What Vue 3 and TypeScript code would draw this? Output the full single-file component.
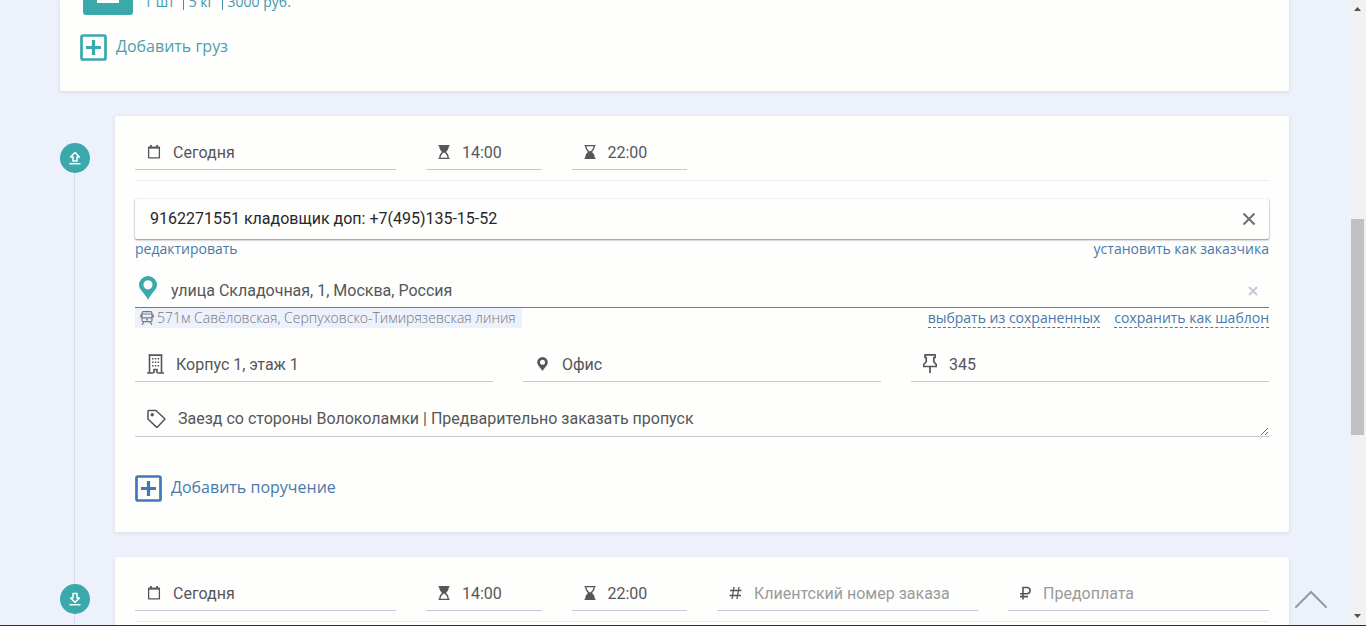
<script setup lang="ts">
import { ref } from 'vue'

interface Field {
  id: string
  icon: string
  label: string
  value: string
  placeholder?: string
  wide?: boolean
}

const pickup = ref<Field[]>([
  { id: 'pickup-date', icon: 'calendar', label: 'Дата', value: 'Сегодня', wide: true },
  { id: 'pickup-from', icon: 'glass-start', label: 'С', value: '14:00' },
  { id: 'pickup-to', icon: 'glass-end', label: 'До', value: '22:00' },
])

const delivery = ref<Field[]>([
  { id: 'delivery-date', icon: 'calendar', label: 'Дата', value: 'Сегодня', wide: true },
  { id: 'delivery-from', icon: 'glass-start', label: 'С', value: '14:00' },
  { id: 'delivery-to', icon: 'glass-end', label: 'До', value: '22:00' },
  { id: 'order-number', icon: 'hash', label: 'Номер', value: '', placeholder: 'Клиентский номер заказа', wide: true },
  { id: 'prepay', icon: 'ruble', label: 'Предоплата', value: '', placeholder: 'Предоплата', wide: true },
])

const place = ref<Field[]>([
  { id: 'building', icon: 'building', label: 'Корпус', value: 'Корпус 1, этаж 1' },
  { id: 'kind', icon: 'marker', label: 'Тип', value: 'Офис' },
  { id: 'room', icon: 'pushpin', label: 'Номер', value: '345' },
])

const contact = ref('9162271551 кладовщик доп: +7(495)135-15-52')
const address = ref('улица Складочная, 1, Москва, Россия')
const note = ref('Заезд со стороны Волоколамки | Предварительно заказать пропуск')
</script>

<template>
  <div class="window">
    <svg class="sprite" aria-hidden="true">
      <symbol id="i-calendar" viewBox="0 0 14 14">
        <path d="M1.600 2.500h10.800v10.300H1.600z" fill="none" stroke="currentColor" stroke-width="1.300" stroke-linejoin="round" />
        <path d="M1 1.800h12v1.700H1zM3 0h1.800v3H3zM9.200 0H11v3H9.200z" fill="currentColor" />
      </symbol>
      <symbol id="i-glass-start" viewBox="0 0 12 14">
        <path d="M.5 0h11v1.300h-.7C10.800 4 9.400 5.600 8 7c1.400 1.400 2.800 3 2.800 5.700h.7V14H.5v-1.300h.7C1.200 10 2.600 8.400 4 7 2.600 5.600 1.200 4 1.200 1.300H.5z" fill="currentColor" />
        <path d="M6 7.400C4.400 8.400 2.700 10 2.500 12.700h7C9.300 10 7.600 8.400 6 7.400z" fill="#fefefd" />
      </symbol>
      <symbol id="i-glass-end" viewBox="0 0 12 14">
        <path d="M.5 0h11v1.300h-.7C10.800 4 9.400 5.600 8 7c1.400 1.400 2.800 3 2.800 5.700h.7V14H.5v-1.300h.7C1.200 10 2.600 8.400 4 7 2.600 5.600 1.200 4 1.200 1.300H.5z" fill="currentColor" />
        <path d="M6 6.600C7.600 5.600 9.300 4 9.500 1.300h-7C2.700 4 4.400 5.600 6 6.600z" fill="#fefefd" />
      </symbol>
      <symbol id="i-hash" viewBox="0 0 13 14">
        <path d="M5 1L3 13M10 1L8 13M1 4.500h11.500M.5 9.500H12" fill="none" stroke="currentColor" stroke-width="1.300" />
      </symbol>
      <symbol id="i-ruble" viewBox="0 0 11 14">
        <path d="M3 13.500V1.500h4a3.100 3.100 0 0 1 0 6.200H0M0 10.600h8" fill="none" stroke="currentColor" stroke-width="1.600" />
      </symbol>
      <symbol id="i-building" viewBox="0 0 17 20">
        <path d="M2.500 19V1.200h12V19M0 19h6.500M10.500 19H17M7 19v-3.500h3V19M1.500 1h14" fill="none" stroke="currentColor" stroke-width="1.600" />
        <path d="M5 4h1.500v1.600H5zm2.800 0h1.500v1.600H7.800zm2.800 0h1.500v1.600h-1.500zM5 7.500h1.500v1.600H5zm2.800 0h1.500v1.600H7.800zm2.800 0h1.500v1.600h-1.500zM5 11h1.500v1.600H5zm2.800 0h1.500v1.600H7.800zm2.800 0h1.500v1.600h-1.500z" fill="currentColor" />
      </symbol>
      <symbol id="i-marker" viewBox="0 0 15 14">
        <path d="M7.500 0A5.300 5.300 0 0 1 12.800 5.200C12.800 8.300 9.500 10.500 7.500 14 5.500 10.500 2.200 8.300 2.200 5.200A5.300 5.300 0 0 1 7.500 0zm0 2.700a2.500 2.500 0 1 0 0 5 2.500 2.500 0 0 0 0-5z" fill="currentColor" />
      </symbol>
      <symbol id="i-pushpin" viewBox="0 0 14 19">
        <path d="M2 .9h10.200v2.600h-1.400v4.200l2.500 2.800v2H.7v-2l2.500-2.800V3.500H2zM7 12.500V19" fill="none" stroke="currentColor" stroke-width="1.700" stroke-linejoin="round" />
      </symbol>
      <symbol id="i-tag" viewBox="0 0 20 20">
        <path d="M1 1.800Q1 1 1.800 1H9.500L18.500 9.500Q19 10 18.500 10.500L11 18.500Q10.500 19 10 18.500L1 10z" fill="none" stroke="currentColor" stroke-width="1.600" stroke-linejoin="round" />
        <circle cx="5.500" cy="5.500" r="1.800" fill="currentColor" />
      </symbol>
      <symbol id="i-plus" viewBox="0 0 27 27">
        <rect x="1.500" y="1.500" width="24" height="24" rx="1.500" fill="none" stroke="currentColor" stroke-width="2.700" />
        <path d="M13.500 6v15M6 13.500h15" stroke="currentColor" stroke-width="3.200" />
      </symbol>
      <symbol id="i-up" viewBox="0 0 14 14">
        <path d="M7 1.500l4.500 4.500H9v4H5V6H2.500z" fill="none" stroke="currentColor" stroke-width="1.500" stroke-linejoin="round" />
        <path d="M1.500 12.700h11" stroke="currentColor" stroke-width="1.500" />
      </symbol>
      <symbol id="i-down" viewBox="0 0 14 14">
        <path d="M7 10.300L2.500 6H5V1.500h4V6h2.500z" fill="none" stroke="currentColor" stroke-width="1.500" stroke-linejoin="round" />
        <path d="M1.500 12.700h11" stroke="currentColor" stroke-width="1.500" />
      </symbol>
    </svg>

    <main class="page">
      <section class="card cargo-card">
        <div class="cargo">
          <div class="cargo-tile">
            <svg width="24" height="30" viewBox="0 0 24 30"><path d="M1 0h22v18H1z" fill="currentColor" /></svg>
          </div>
          <p class="cargo-info"><span>1 шт</span><span>5 кг</span><span>3000 руб.</span></p>
        </div>
        <button type="button" class="add teal">
          <svg width="27" height="27"><use href="#i-plus" /></svg>
          <span>Добавить груз</span>
        </button>
      </section>

      <section class="stop">
        <div class="rail">
          <span class="rail-top"></span>
          <span class="badge"><svg width="14" height="14"><use href="#i-up" /></svg></span>
          <span class="rail-line"></span>
        </div>
        <div class="card stop-card">
          <div class="schedule">
            <label v-for="f in pickup" :key="f.id" class="field" :class="{ wide: f.wide }">
              <svg class="icon" :class="f.icon"><use :href="'#i-' + f.icon" /></svg>
              <input v-model="f.value" type="text" :id="f.id" :aria-label="f.label" />
            </label>
          </div>
          <hr />
          <div class="contact">
            <input v-model="contact" type="text" aria-label="Контакт" />
            <button type="button" class="clear" aria-label="Удалить контакт" @click="contact = ''">
              <svg width="14" height="14" viewBox="0 0 14 14"><path d="M1.500 1.500l11 11M12.500 1.500l-11 11" stroke="currentColor" stroke-width="2" /></svg>
            </button>
          </div>
          <div class="links">
            <a href="#edit">редактировать</a>
            <a href="#customer">установить как заказчика</a>
          </div>
          <div class="address">
            <svg class="pin" width="18" height="24" viewBox="0 0 18 24">
              <path d="M9 0a9 9 0 0 1 9 9c0 5-6 8-9 15C6 17 0 14 0 9a9 9 0 0 1 9-9zm0 4.200a4.600 4.600 0 1 0 0 9.200 4.600 4.600 0 0 0 0-9.200z" fill="currentColor" />
            </svg>
            <input v-model="address" type="text" aria-label="Адрес" />
            <button type="button" class="clear pale" aria-label="Очистить адрес" @click="address = ''">
              <svg width="10" height="10" viewBox="0 0 10 10"><path d="M1 1l8 8M9 1L1 9" stroke="currentColor" stroke-width="2.200" /></svg>
            </button>
          </div>
          <div class="links saved">
            <span class="metro">
              <svg width="14" height="14" viewBox="0 0 14 14">
                <path d="M3.500.7h7Q12 .7 12 2.200v7Q12 10.700 10.500 10.700h-7Q2 10.700 2 9.200v-7Q2 .7 3.500.7zM2 3h10M2 6.800h10M3.800 11L2.200 13.800M10.200 11l1.600 2.800M.8 3.500v3M13.200 3.500v3" fill="none" stroke="currentColor" stroke-width="1.200" />
                <circle cx="7" cy="8.800" r="1" fill="currentColor" />
              </svg>
              571м Савёловская, Серпуховско-Тимирязевская линия
            </span>
            <span class="saved-actions">
              <a href="#saved">выбрать из сохраненных</a>
              <a href="#template">сохранить как шаблон</a>
            </span>
          </div>
          <div class="place">
            <label v-for="f in place" :key="f.id" class="field">
              <svg class="icon" :class="f.icon"><use :href="'#i-' + f.icon" /></svg>
              <input v-model="f.value" type="text" :id="f.id" :aria-label="f.label" />
            </label>
          </div>
          <label class="field note">
            <svg class="icon tag"><use href="#i-tag" /></svg>
            <textarea v-model="note" rows="1" aria-label="Комментарий"></textarea>
          </label>
          <button type="button" class="add blue">
            <svg width="27" height="27"><use href="#i-plus" /></svg>
            <span>Добавить поручение</span>
          </button>
        </div>
      </section>

      <section class="stop">
        <div class="rail">
          <span class="rail-top"></span>
          <span class="badge"><svg width="14" height="14"><use href="#i-down" /></svg></span>
          <span class="rail-line"></span>
        </div>
        <div class="card stop-card">
          <div class="schedule">
            <label v-for="f in delivery" :key="f.id" class="field" :class="{ wide: f.wide }">
              <svg class="icon" :class="f.icon"><use :href="'#i-' + f.icon" /></svg>
              <input v-model="f.value" type="text" :id="f.id" :aria-label="f.label" :placeholder="f.placeholder" />
            </label>
          </div>
          <hr />
        </div>
      </section>
    </main>

    <button type="button" class="to-top" aria-label="Наверх">
      <svg width="34" height="20" viewBox="0 0 34 20"><path d="M2 18L17 3l15 15" fill="none" stroke="currentColor" stroke-width="2" stroke-linecap="round" /></svg>
    </button>

    <div class="scrollbar" aria-hidden="true">
      <svg width="7" height="4" viewBox="0 0 7 4"><path d="M0 4L3.500 0 7 4z" fill="currentColor" /></svg>
      <div class="track"><div class="thumb"></div></div>
      <svg width="7" height="4" viewBox="0 0 7 4"><path d="M0 0l3.500 4L7 0z" fill="currentColor" /></svg>
    </div>
  </div>
</template>

<style>
body {
  margin: 0;
  background: #edf1fc;
}
</style>

<style scoped>
.window {
  box-sizing: border-box;
  display: flex;
  height: 100vh;
  overflow: hidden;
  position: relative;
  background: #edf1fc;
  border-bottom: 1px solid #2a2f31;
  font-family: "Open Sans", "Noto Sans", sans-serif;
  color: #55565a;
}
.sprite {
  position: absolute;
  width: 0;
  height: 0;
}
.page {
  flex: 1;
  min-width: 0;
  padding: 0 60px;
}
.card {
  box-sizing: border-box;
  background: #fefefd;
  border-radius: 2px;
  box-shadow: 0 1px 4px rgba(60, 60, 40, 0.12);
}
.cargo-card {
  padding: 0 20px 30px;
  margin-bottom: 25px;
  border-radius: 0 0 2px 2px;
}
.cargo {
  display: flex;
  align-items: flex-end;
  gap: 11px;
  height: 15px;
  padding-left: 3px;
  margin-bottom: 19px;
  color: #3f97a9;
}
.cargo-tile {
  display: flex;
  align-items: flex-end;
  justify-content: center;
  box-sizing: border-box;
  width: 50px;
  height: 50px;
  border-radius: 3px;
  background: #3ba8ab;
  color: #fff;
}
.cargo-info {
  display: flex;
  margin: 0;
  font-size: 14px;
  line-height: 26px;
}
.cargo-info span + span {
  margin-left: 8px;
}
.cargo-info span + span::before {
  content: "";
  display: inline-block;
  width: 1px;
  height: 14px;
  margin-right: 5px;
  vertical-align: -3px;
  background: currentColor;
}
button {
  border: 0;
  padding: 0;
  background: none;
  font-family: inherit;
  cursor: pointer;
}
svg {
  display: block;
  flex: none;
}
.add {
  display: flex;
  gap: 9px;
  font-size: 16px;
  line-height: 24px;
}
.add.teal {
  color: #3ba8ab;
}
.add.teal span {
  color: #4e9eac;
}
.add.blue {
  color: #4277bd;
  margin-top: 38px;
}
.add.blue span {
  color: #4a78ab;
}
.stop {
  display: grid;
  grid-template-columns: 30px minmax(0, 1fr);
  column-gap: 25px;
}
.stop-card {
  padding: 18px 20px 30px;
  margin-bottom: 25px;
}
.rail {
  display: flex;
  flex-direction: column;
  align-items: center;
}
.rail-top,
.rail-line {
  width: 1px;
  margin-right: 1px;
  background: #d8def0;
}
.rail-top {
  height: 27px;
}
.stop:nth-of-type(2) .rail-top {
  background: none;
}
.rail-line {
  flex: 1;
}
.badge {
  display: flex;
  align-items: center;
  justify-content: center;
  width: 30px;
  height: 30px;
  border-radius: 50%;
  background: #3ba8ab;
  color: #fff;
}
.schedule {
  display: grid;
  grid-template-columns: repeat(8, minmax(0, 1fr));
  column-gap: 30px;
}
.wide {
  grid-column: span 2;
}
.place {
  display: grid;
  grid-template-columns: repeat(3, minmax(0, 1fr));
  column-gap: 30px;
  margin-top: 18px;
}
.field {
  box-sizing: border-box;
  display: flex;
  align-items: center;
  gap: 12px;
  height: 36px;
  padding-left: 12px;
  border-bottom: 1px solid #c3c9d8;
}
.icon {
  width: 14px;
  height: 14px;
}
.glass-start,
.glass-end {
  width: 12px;
}
.hash {
  width: 13px;
}
.ruble {
  width: 11px;
}
.building {
  width: 17px;
  height: 20px;
}
.marker {
  width: 15px;
}
.pushpin {
  width: 14px;
  height: 19px;
}
.tag {
  width: 19px;
  height: 20px;
}
input,
textarea {
  flex: 1;
  min-width: 0;
  box-sizing: border-box;
  padding: 0;
  border: 0;
  outline: 0;
  background: none;
  color: #55565a;
  font-family: Roboto, "Noto Sans", sans-serif;
  font-size: 16px;
  line-height: 20px;
}
.field input {
  height: 35px;
  padding-top: 2px;
}
input::placeholder {
  color: #999a9c;
  opacity: 1;
}
.note {
  margin-top: 19px;
}
textarea {
  height: 35px;
  padding: 8px 0 7px;
  overflow: hidden;
  resize: vertical;
}
hr {
  height: 1px;
  margin: 10px 0 18px;
  border: 0;
  background: #ebebed;
}
.contact {
  display: flex;
  align-items: center;
  height: 40px;
  padding: 0 13px 0 15px;
  border-radius: 2px;
  box-shadow: 0 1px 2px rgba(30, 30, 50, 0.5), 0 0 2px rgba(30, 30, 50, 0.1);
}
.contact input {
  color: #26272b;
}
.clear {
  color: #6e6e70;
}
.clear.pale {
  color: #c5cbd9;
}
.links {
  display: flex;
  justify-content: space-between;
  font-size: 14px;
  line-height: 20px;
}
.links a {
  color: #4a78ab;
  text-decoration: none;
}
.address {
  box-sizing: border-box;
  display: flex;
  align-items: center;
  gap: 14px;
  height: 34px;
  margin-top: 15px;
  padding: 0 11px 0 4px;
  border-bottom: 1px solid #2b9a9f;
  color: #3ba8ab;
}
.pin {
  align-self: flex-start;
  margin-top: 2px;
}
.metro {
  display: flex;
  align-items: center;
  gap: 3px;
  padding: 0 6px 0 5px;
  background: #edf1fc;
  color: #77787c;
  font-weight: 300;
}
.saved-actions {
  display: flex;
  gap: 14px;
}
.saved-actions a {
  box-sizing: border-box;
  height: 20px;
  border-bottom: 1px dashed #4a78ab;
}
.to-top {
  position: absolute;
  right: 38px;
  bottom: 16px;
  color: #8d9ca8;
}
.scrollbar {
  box-sizing: border-box;
  display: flex;
  flex-direction: column;
  align-items: center;
  width: 17px;
  padding: 7px 0;
  background: #f1f1f3;
  color: #505050;
}
.track {
  flex: 1;
  display: flex;
  flex-direction: column;
  align-self: stretch;
  padding: 6px 2px;
}
.track::before {
  content: "";
  flex: 202;
}
.track::after {
  content: "";
  flex: 173;
}
.thumb {
  flex: 216;
  background: #c1c1c3;
}
</style>
